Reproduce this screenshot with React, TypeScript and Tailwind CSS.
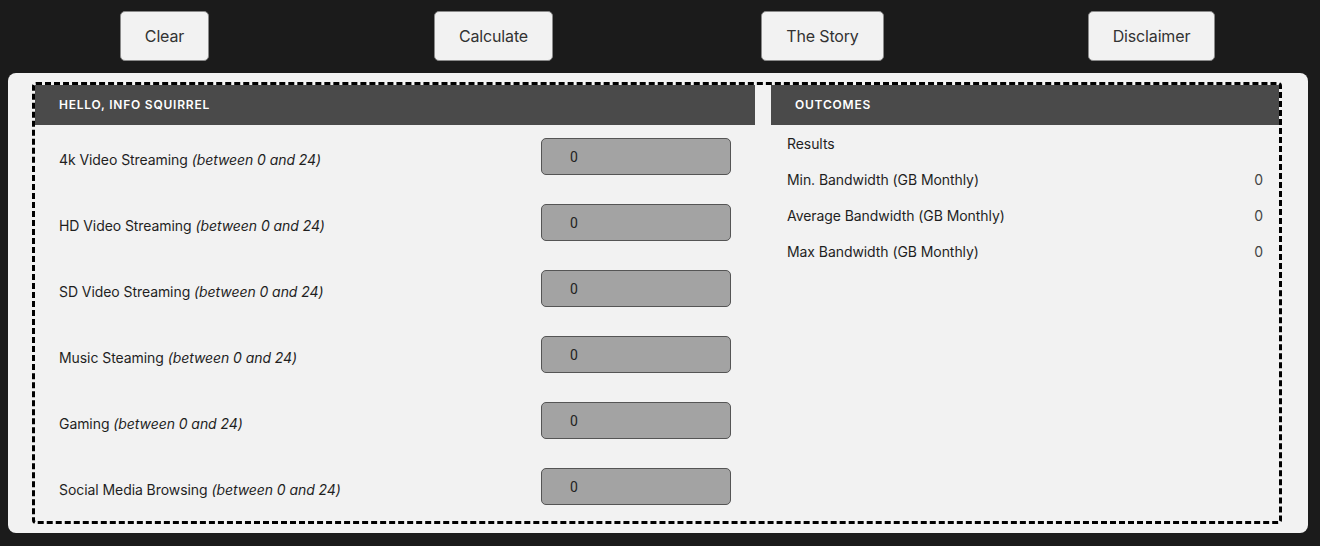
import React from "react";

const rows = [
  "4k Video Streaming",
  "HD Video Streaming",
  "SD Video Streaming",
  "Music Steaming",
  "Gaming",
  "Social Media Browsing",
];

const results = [
  "Min. Bandwidth (GB Monthly)",
  "Average Bandwidth (GB Monthly)",
  "Max Bandwidth (GB Monthly)",
];

export default function App() {
  return (
    <div className="min-h-[546px] bg-[#1b1b1b] pt-[11px] font-['Inter',sans-serif]">
      <div className="grid w-[1316px] grid-cols-4">
        {["Clear", "Calculate", "The Story", "Disclaimer"].map((b) => (
          <div key={b} className="flex justify-center">
            <button className="h-[50px] rounded-[5px] border border-[#8a8a8a] bg-[#f2f2f2] px-[24px] text-[16px] tracking-[-0.01em] text-[#333]">
              {b}
            </button>
          </div>
        ))}
      </div>
      <div className="ml-[8px] mt-[12px] h-[460px] w-[1300px] rounded-[8px] bg-[#f2f2f2] pl-[24px] pr-[26px] pt-[9px]">
        <div className="flex h-[442px] gap-4 rounded-[4px] border-[3px] border-dashed border-black">
          <div className="w-[720px]">
            <div className="flex h-[40px] items-center bg-[#4a4a4a] px-[24px] text-[12px] font-semibold uppercase tracking-[0.065em] text-white">
              Hello, Info Squirrel
            </div>
            <div className="flex flex-col gap-[29px] px-[24px] pt-[13px]">
              {rows.map((r) => (
                <div key={r} className="flex h-[37px] items-center justify-between">
                  <span className="pt-[5px] text-[14px] tracking-[-0.005em] text-[#1f1f1f]">
                    {r} <i>(between 0 and 24)</i>
                  </span>
                  <div className="flex h-[37px] w-[190px] items-center rounded-[5px] border border-[#555] bg-[#a3a3a3] pl-[28px] pt-[2px] font-['Roboto',sans-serif] text-[14px] text-[#222]">
                    0
                  </div>
                </div>
              ))}
            </div>
          </div>
          <div className="flex-1">
            <div className="flex h-[40px] items-center bg-[#4a4a4a] px-[24px] text-[12px] font-semibold uppercase tracking-[0.065em] text-white">
              Outcomes
            </div>
            <div className="px-[16px] text-[14px] tracking-[-0.005em] text-[#1f1f1f]">
              <div className="flex h-[36px] items-center">Results</div>
              {results.map((r) => (
                <div key={r} className="flex h-[36px] items-center justify-between">
                  <span>{r}</span>
                  <span className="text-[#444]">0</span>
                </div>
              ))}
            </div>
          </div>
        </div>
      </div>
    </div>
  );
}
